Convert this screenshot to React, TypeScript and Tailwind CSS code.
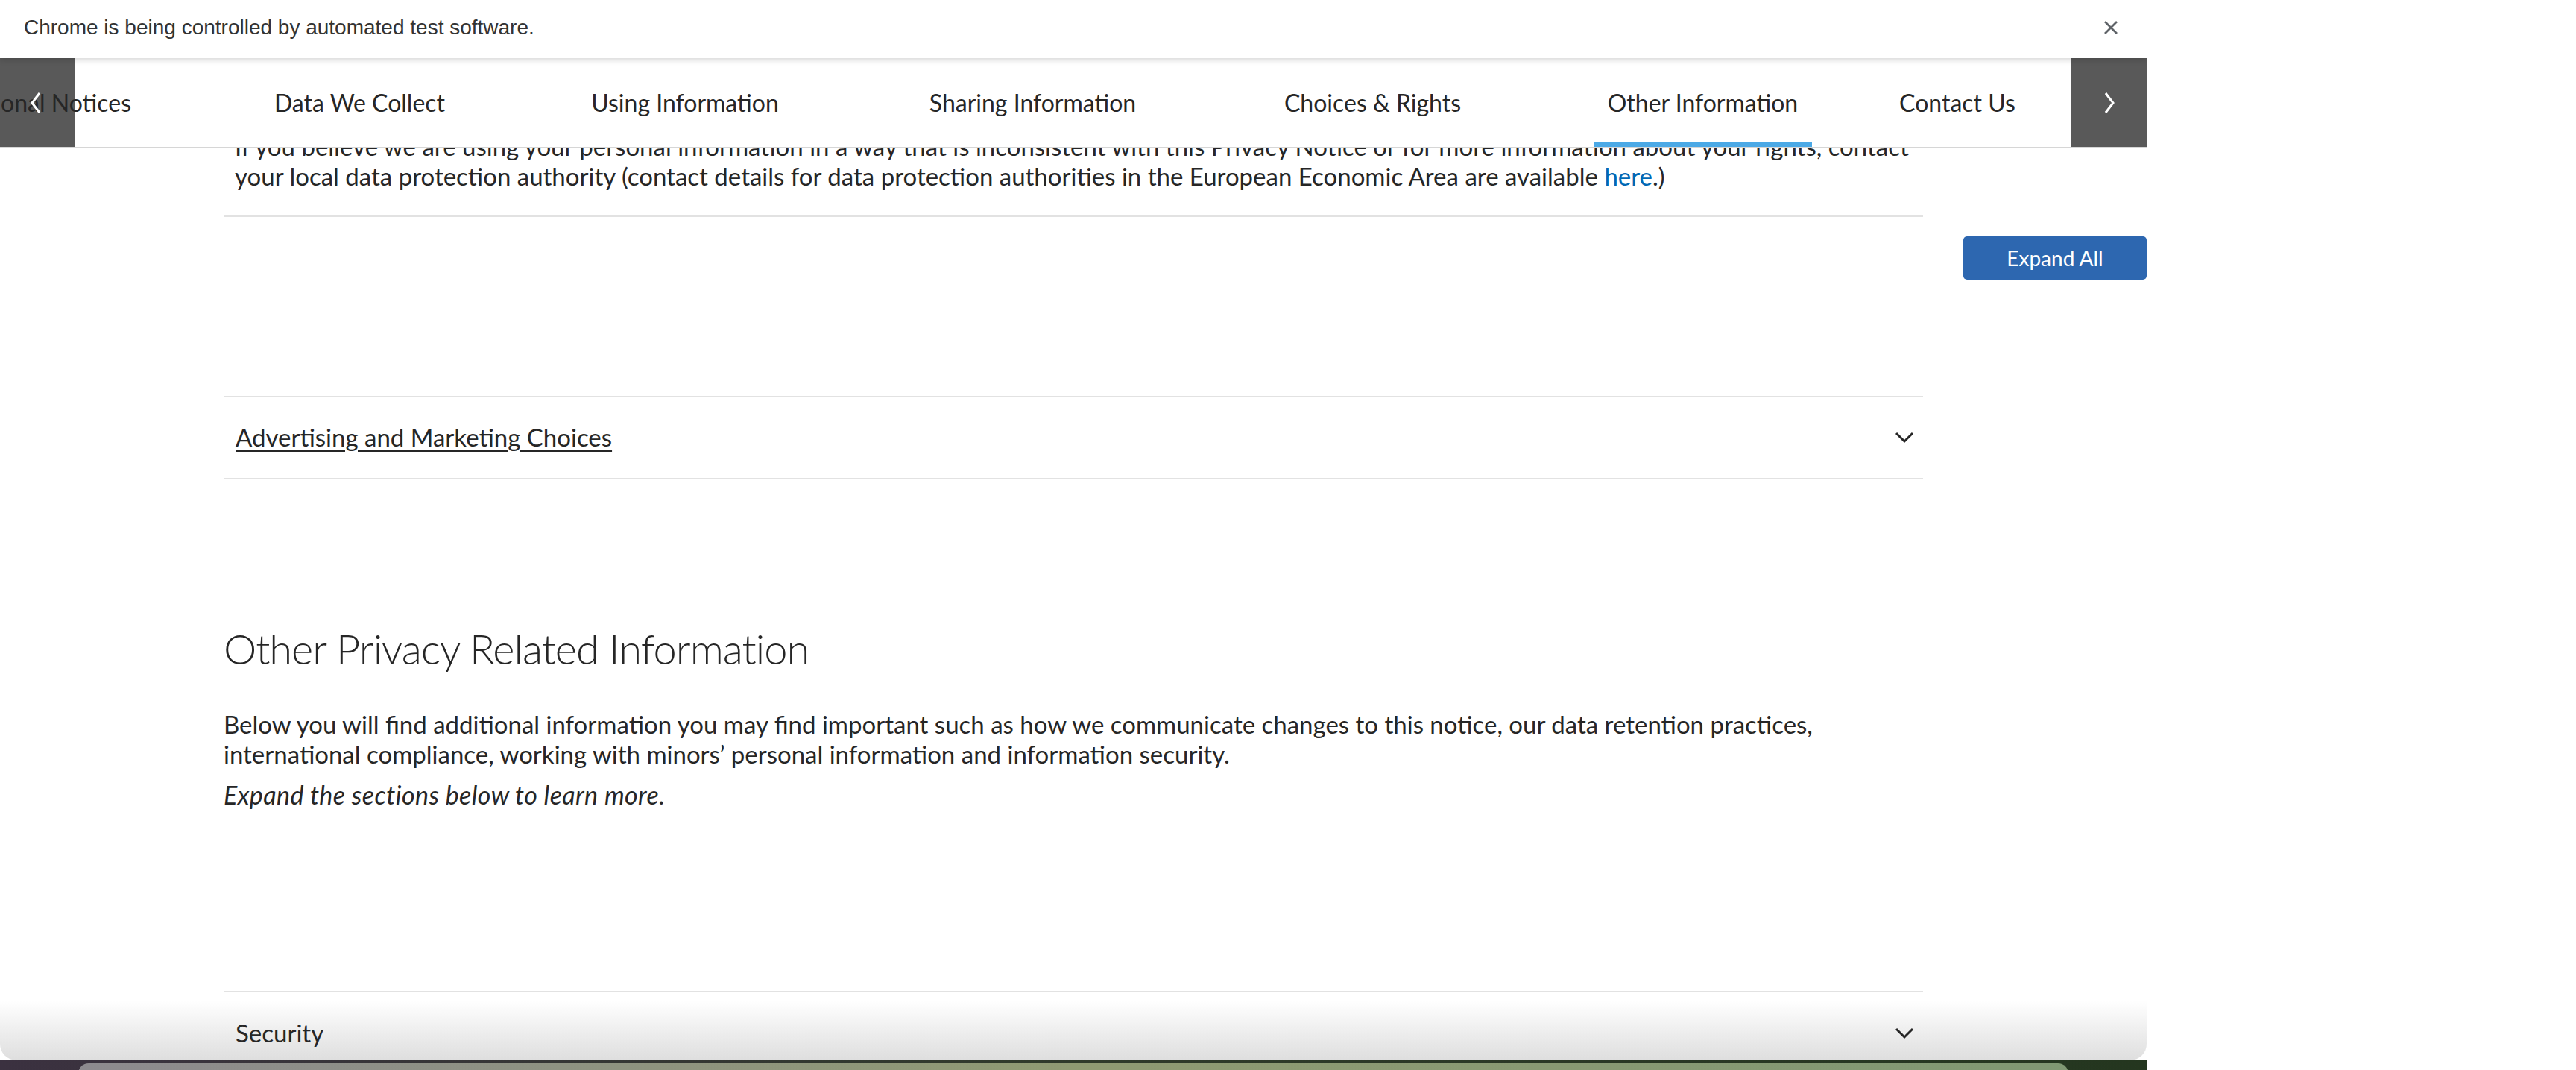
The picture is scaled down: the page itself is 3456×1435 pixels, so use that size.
import React from "react";

const tabFont = { fontFamily: "Lato, 'Open Sans', sans-serif" };

function Chevron({ className }: { className?: string }) {
  return (
    <svg width="26" height="16" viewBox="0 0 26 16" className={className}>
      <polyline points="2,2 13,13 24,2" fill="none" stroke="#262626" strokeWidth="3" />
    </svg>
  );
}

export default function App() {
  return (
    <div className="relative w-[3456px] h-[1435px] bg-white overflow-hidden" style={tabFont}>
      {/* Browser window */}
      <div className="relative w-[2880px] h-[1422px] rounded-b-[22px] overflow-hidden bg-white flex flex-col">
        {/* Infobar */}
        <div className="relative z-30 h-[78px] shrink-0 flex items-center justify-between pl-[32px] pr-[38px] pb-[4px] bg-white shadow-[0_2px_8px_rgba(0,0,0,0.18)]">
          <span className="text-[28px] text-[#333333]" style={{ fontFamily: "'Liberation Sans', Arial, sans-serif" }}>
            Chrome is being controlled by automated test software.
          </span>
          <svg width="20" height="20" viewBox="0 0 20 20">
            <line x1="2" y1="2" x2="18" y2="18" stroke="#5f6368" strokeWidth="2.6" />
            <line x1="18" y1="2" x2="2" y2="18" stroke="#5f6368" strokeWidth="2.6" />
          </svg>
        </div>

        {/* Viewport */}
        <div className="relative flex-1 overflow-hidden">
          {/* bottom fade (behind content) */}
          <div className="absolute left-0 right-0 bottom-0 h-[80px] bg-gradient-to-b from-white/0 to-[#dedede] pointer-events-none" />

          {/* Sticky nav overlay */}
          <div className="absolute top-0 left-0 right-0 z-20 h-[121px] bg-white border-b-2 border-[#d6d6d6]">
            <div className="absolute left-0 top-0 w-[100px] h-[119px] bg-[#595959]" />
            <div className="absolute right-0 top-0 w-[101px] h-[119px] bg-[#595959] flex items-center justify-center">
              <svg width="16" height="30" viewBox="0 0 16 30">
                <polyline points="3,2 13,15 3,28" fill="none" stroke="#ffffff" strokeWidth="3" />
              </svg>
            </div>
            <div className="relative z-10 flex h-[119px] items-stretch text-[32px] text-[#262626] whitespace-nowrap">
              <div className="ml-[-69px] w-[260px] flex items-center justify-end pr-[15px]">Regional Notices</div>
              <div className="ml-[162px] w-[259px] flex items-center justify-center">Data We Collect</div>
              <div className="ml-[162px] w-[290px] flex items-center justify-center">Using Information</div>
              <div className="ml-[162px] w-[319px] flex items-center justify-center">Sharing Information</div>
              <div className="ml-[161px] w-[271px] flex items-center justify-center">Choices &amp; Rights</div>
              <div className="ml-[161px] w-[293px] relative flex items-center justify-center">
                Other Information
                <div className="absolute left-0 right-0 bottom-0 h-[6px] bg-[#4ba9e6]" />
              </div>
              <div className="ml-[102px] w-[186px] flex items-center justify-center">Contact Us</div>
            </div>
            <div className="absolute left-[40px] top-[45px] z-20">
              <svg width="16" height="30" viewBox="0 0 16 30">
                <polyline points="13,2 3,15 13,28" fill="none" stroke="#ffffff" strokeWidth="3" />
              </svg>
            </div>
          </div>

          {/* Page content */}
          <div className="relative z-10 flex text-[#262626]">
            <div className="w-[300px] shrink-0" />
            <div className="w-[2280px] shrink-0">
              {/* Expanded accordion remainder */}
              <div className="pt-[98px] pb-[33px] px-[15px] border-b-2 border-[#e2e2e2] text-[33px] leading-[40px] whitespace-nowrap">
                <div>
                  If you believe we are using your personal information in a way that is inconsistent with this Privacy Notice or for more information about your rights, contact
                </div>
                <div>
                  your local data protection authority (contact details for data protection authorities in the European Economic Area are available{" "}
                  <span className="text-[#0068b5]">here</span>.)
                </div>
              </div>

              <div className="mt-[240px] border-y-2 border-[#e2e2e2] h-[112px] flex items-center justify-between pl-[16px] pr-[12px]">
                <span className="text-[33px] underline decoration-[3px] underline-offset-[4px]">
                  Advertising and Marketing Choices
                </span>
                <Chevron />
              </div>

              <h2 className="mt-[199px] text-[56px] leading-[56px] font-light tracking-[-1px] text-[#262626]">
                Other Privacy Related Information
              </h2>

              <div className="mt-[53px] text-[33px] leading-[40px] whitespace-nowrap">
                <div>
                  Below you will find additional information you may find important such as how we communicate changes to this notice, our data retention practices,
                </div>
                <div>international compliance, working with minors’ personal information and information security.</div>
              </div>
              <p className="mt-[15px] text-[34px] leading-[40px] italic tracking-[0.4px]">Expand the sections below to learn more.</p>

              <div className="mt-[243px] border-t-2 border-[#e2e2e2] h-[112px] flex items-center justify-between pl-[16px] pr-[12px]">
                <span className="text-[33px]">Security</span>
                <Chevron />
              </div>
            </div>
            <div className="ml-[54px] w-[246px] shrink-0">
              <div className="mt-[239px] h-[58px] rounded-[5px] bg-[#2d67b0] text-white text-[28px] flex items-center justify-center">
                Expand All
              </div>
            </div>
          </div>
        </div>
      </div>

      {/* Desktop wallpaper strip */}
      <div className="relative w-[2880px] h-[13px] bg-gradient-to-r from-[#3b3140] via-[#2f3a2a] to-[#24361f]">
        <div className="absolute left-[105px] top-[4px] w-[2670px] h-[20px] rounded-t-[14px] bg-gradient-to-r from-[#8d8a8f] via-[#8f9a72] to-[#809873]" />
      </div>
    </div>
  );
}
